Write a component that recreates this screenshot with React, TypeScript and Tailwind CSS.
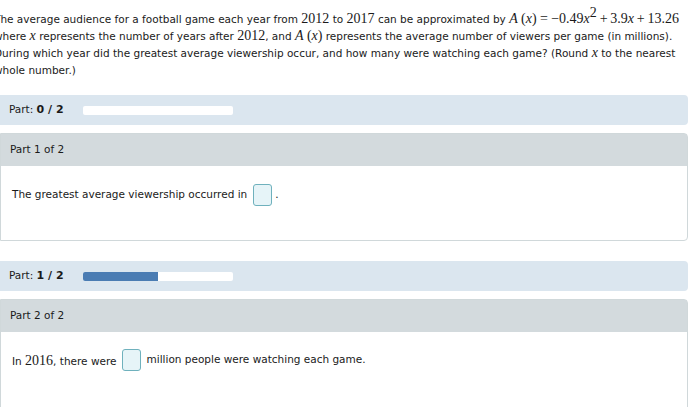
import React from "react";

const M = ({ children }: { children: React.ReactNode }) => (
  <span className="text-[14px] leading-none" style={{ fontFamily: '"Liberation Serif", serif' }}>{children}</span>
);
const V = ({ children }: { children: React.ReactNode }) => (
  <span className="italic text-[14px] leading-none" style={{ fontFamily: '"Liberation Serif", serif' }}>{children}</span>
);

const Box = ({ cls }: { cls: string }) => (
  <span className={`inline-block w-[19px] h-[22px] rounded-[3px] border border-[#6fb1bd] bg-[#e6f4f8] ${cls}`} />
);

function PartBar({ n, pct }: { n: number; pct: number }) {
  return (
    <div className="h-[30px] bg-[#dbe6ef] rounded-r-[4px] flex items-center pl-[9px]">
      <span className="w-[74px] shrink-0">
        Part: <span className="font-bold text-[11px]">{n}&nbsp;/&nbsp;2</span>
      </span>
      <div className="w-[150px] h-[9px] bg-white rounded-[2px] overflow-hidden">
        <div className="h-full bg-[#4a7cb3]" style={{ width: `${pct}%` }} />
      </div>
    </div>
  );
}

export default function App() {
  return (
    <div
      className="w-[696px] h-[407px] overflow-hidden bg-white text-[10.5px] text-[#1a1a1a]"
      style={{ fontFamily: '"DejaVu Sans", Verdana, sans-serif' }}
    >
      <div className="-ml-[6px] w-[694px]">
        <div className="pt-[10px] whitespace-nowrap">
          <p className="h-[18px] leading-[18px]">
            The average audience for a football game each year from <M>2012</M> to <M>2017</M> can be approximated by{" "}
            <V>A</V> <M>(</M><V>x</V><M>)</M> <M>=</M> <M>−0.49</M><V>x</V>
            <sup className="text-[9px] -top-[0.7em]"><M>2</M></sup>
            <M>{"\u2009+\u20093.9"}</M><V>x</V><M>{"\u2009+\u200913.26"}</M>
          </p>
          <p className="h-[17px] leading-[17px]">
            where <V>x</V> represents the number of years after <M>2012</M>, and <V>A</V> <M>(</M><V>x</V><M>)</M> represents the average number of viewers per game (in millions).
          </p>
          <p className="h-[17px] leading-[17px]">
            During which year did the greatest average viewership occur, and how many were watching each game? (Round <V>x</V> to the nearest
          </p>
          <p className="h-[17px] leading-[17px]">whole number.)</p>
        </div>

        <div className="mt-[16px] pl-[6px]">
          <PartBar n={0} pct={0} />
          <div className="mt-[8px] border border-[#d0d8da] rounded-r-[4px] h-[108px]">
            <div className="h-[32px] bg-[#d3dadd] flex items-center pl-[9px]">Part 1 of 2</div>
            <div className="pl-[11px] pt-[18px] flex items-center">
              <span>The greatest average viewership occurred in</span>
              <Box cls="ml-[6px] mr-[3px]" />
              <span>.</span>
            </div>
          </div>

          <div className="mt-[20px]">
            <PartBar n={1} pct={50} />
          </div>
          <div className="mt-[8px] border border-[#d0d8da] rounded-r-[4px] h-[120px]">
            <div className="h-[32px] bg-[#d3dadd] flex items-center pl-[9px]">Part 2 of 2</div>
            <div className="pl-[11px] pt-[17px] flex items-center">
              <span>
                In <span className="text-[14px]" style={{ fontFamily: '"Liberation Serif", serif' }}>2016</span>, there were
              </span>
              <Box cls="ml-[6px] mr-[5px]" />
              <span>million people were watching each game.</span>
            </div>
          </div>
        </div>
      </div>
    </div>
  );
}
